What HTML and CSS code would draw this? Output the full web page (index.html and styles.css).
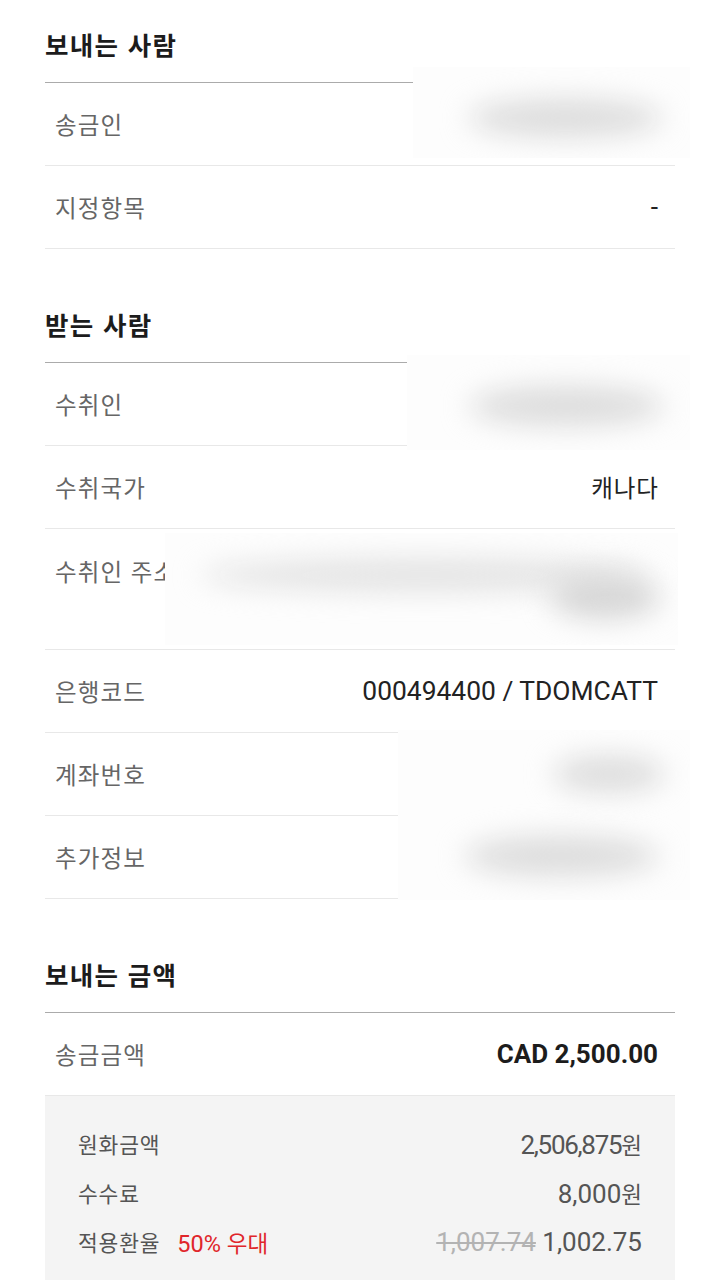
FILE: index.html
```html
<!DOCTYPE html>
<html lang="ko">
<head>
<meta charset="utf-8">
<link rel="stylesheet" href="styles.css">
</head>
<body>
<div class="page">
  <section class="section first">
    <h2 class="title">보내는 사람</h2>
    <div class="row"><span class="label">송금인</span><span class="value">&nbsp;</span></div>
    <div class="row"><span class="label">지정항목</span><span class="value">-</span></div>
  </section>

  <section class="section">
    <h2 class="title">받는 사람</h2>
    <div class="row"><span class="label">수취인</span><span class="value">&nbsp;</span></div>
    <div class="row"><span class="label">수취국가</span><span class="value ko-val">캐나다</span></div>
    <div class="row tall"><span class="label">수취인 주소</span><span class="value">&nbsp;</span></div>
    <div class="row"><span class="label">은행코드</span><span class="value">000494400 / TDOMCATT</span></div>
    <div class="row"><span class="label">계좌번호</span><span class="value">&nbsp;</span></div>
    <div class="row"><span class="label">추가정보</span><span class="value">&nbsp;</span></div>
  </section>

  <section class="section">
    <h2 class="title">보내는 금액</h2>
    <div class="row"><span class="label">송금금액</span><span class="value strong">CAD 2,500.00</span></div>
    <div class="detail">
      <div class="drow"><span class="dlabel">원화금액</span><span class="dvalue"><span class="narrow">2,506,875</span><span class="ko">원</span></span></div>
      <div class="drow"><span class="dlabel">수수료</span><span class="dvalue">8,000<span class="ko">원</span></span></div>
      <div class="drow"><span class="dlabel">적용환율<span class="promo">50% <span class="ko">우대</span></span></span><span class="dvalue"><s class="old">1,007.74</s> 1,002.75</span></div>
    </div>
  </section>

  <div class="mask m-sender"><i class="blob b1"></i></div>
  <div class="mask m-recv"><i class="blob b2"></i></div>
  <div class="mask m-addr"><i class="blob b3"></i><i class="blob b4"></i></div>
  <div class="mask m-acct"><i class="blob b5"></i><i class="blob b6"></i></div>
</div>
</body>
</html>
```

FILE: styles.css
```css
html, body {
  margin: 0;
  padding: 0;
  background: #ffffff;
}
body {
  font-family: Roboto, "Noto Sans CJK KR", sans-serif;
  color: #222;
  overflow: hidden;
}
.page {
  position: relative;
  padding: 0 45px;
  height: 1280px;
}
.section {
  margin-top: 31px;
}
.section.first {
  margin-top: 0;
}
.title {
  margin: 0;
  padding: 29px 0 23px;
  line-height: 30px;
  font-family: "Noto Sans CJK KR", sans-serif;
  font-size: 25.5px;
  letter-spacing: 1.3px;
  font-weight: 700;
  color: #1c1c1c;
  border-bottom: 1px solid #ababab;
}
.row {
  display: flex;
  justify-content: space-between;
  align-items: center;
  height: 82px;
  padding: 0 17px 0 10px;
  border-bottom: 1px solid #e8e8e8;
}
.row.tall {
  height: 120px;
  align-items: flex-start;
}
.row.tall .label {
  margin-top: 27px;
}
.label {
  font-family: "Noto Sans CJK KR", sans-serif;
  font-size: 23.5px;
  letter-spacing: 1.1px;
  line-height: 30px;
  color: #666;
}
.value {
  font-size: 26.4px;
  line-height: 30px;
  color: #222;
}
.value.ko-val {
  font-family: "Noto Sans CJK KR", sans-serif;
  font-size: 23.5px;
  letter-spacing: 1px;
  margin-right: -1px;
}
.value.strong {
  font-weight: 700;
  font-size: 26px;
  color: #1c1c1c;
}
.detail {
  background: #f4f4f4;
  padding: 23px 33px 60px;
}
.drow {
  display: flex;
  justify-content: space-between;
  align-items: center;
  height: 49px;
}
.dlabel {
  font-family: "Noto Sans CJK KR", sans-serif;
  font-size: 21.5px;
  letter-spacing: 0.8px;
  color: #555;
  display: flex;
  align-items: center;
}
.dvalue {
  font-size: 26px;
  color: #555;
}
.narrow {
  letter-spacing: -1.3px;
}
.ko {
  font-family: "Noto Sans CJK KR", sans-serif;
  font-size: 22.5px;
  letter-spacing: 0;
}
.promo {
  margin-left: 17px;
  letter-spacing: 0;
  color: #e0262b;
  font-family: Roboto, "Noto Sans CJK KR", sans-serif;
  font-size: 23.5px;
}
.old {
  color: #b3b3b3;
  text-decoration-thickness: 1.5px;
}
.mask {
  position: absolute;
  overflow: hidden;
  background: #fdfdfd;
}
.blob {
  position: absolute;
  display: block;
  border-radius: 50%;
  background: #dcdcdc;
  filter: blur(14px);
}
.m-sender { left: 413px; top: 67px; width: 277px; height: 91px; }
.b1 { left: 55px; top: 32px; width: 195px; height: 38px; }
.m-recv { left: 407px; top: 355px; width: 283px; height: 95px; }
.b2 { left: 62px; top: 31px; width: 195px; height: 40px; }
.m-addr { left: 165px; top: 533px; width: 513px; height: 112px; }
.b3 { left: 35px; top: 26px; width: 450px; height: 32px; background: #e2e2e2; }
.b4 { left: 385px; top: 42px; width: 110px; height: 44px; background: #d6d6d6; }
.m-acct { left: 398px; top: 730px; width: 292px; height: 170px; }
.b5 { left: 155px; top: 26px; width: 112px; height: 36px; }
.b6 { left: 66px; top: 106px; width: 195px; height: 40px; }
```
